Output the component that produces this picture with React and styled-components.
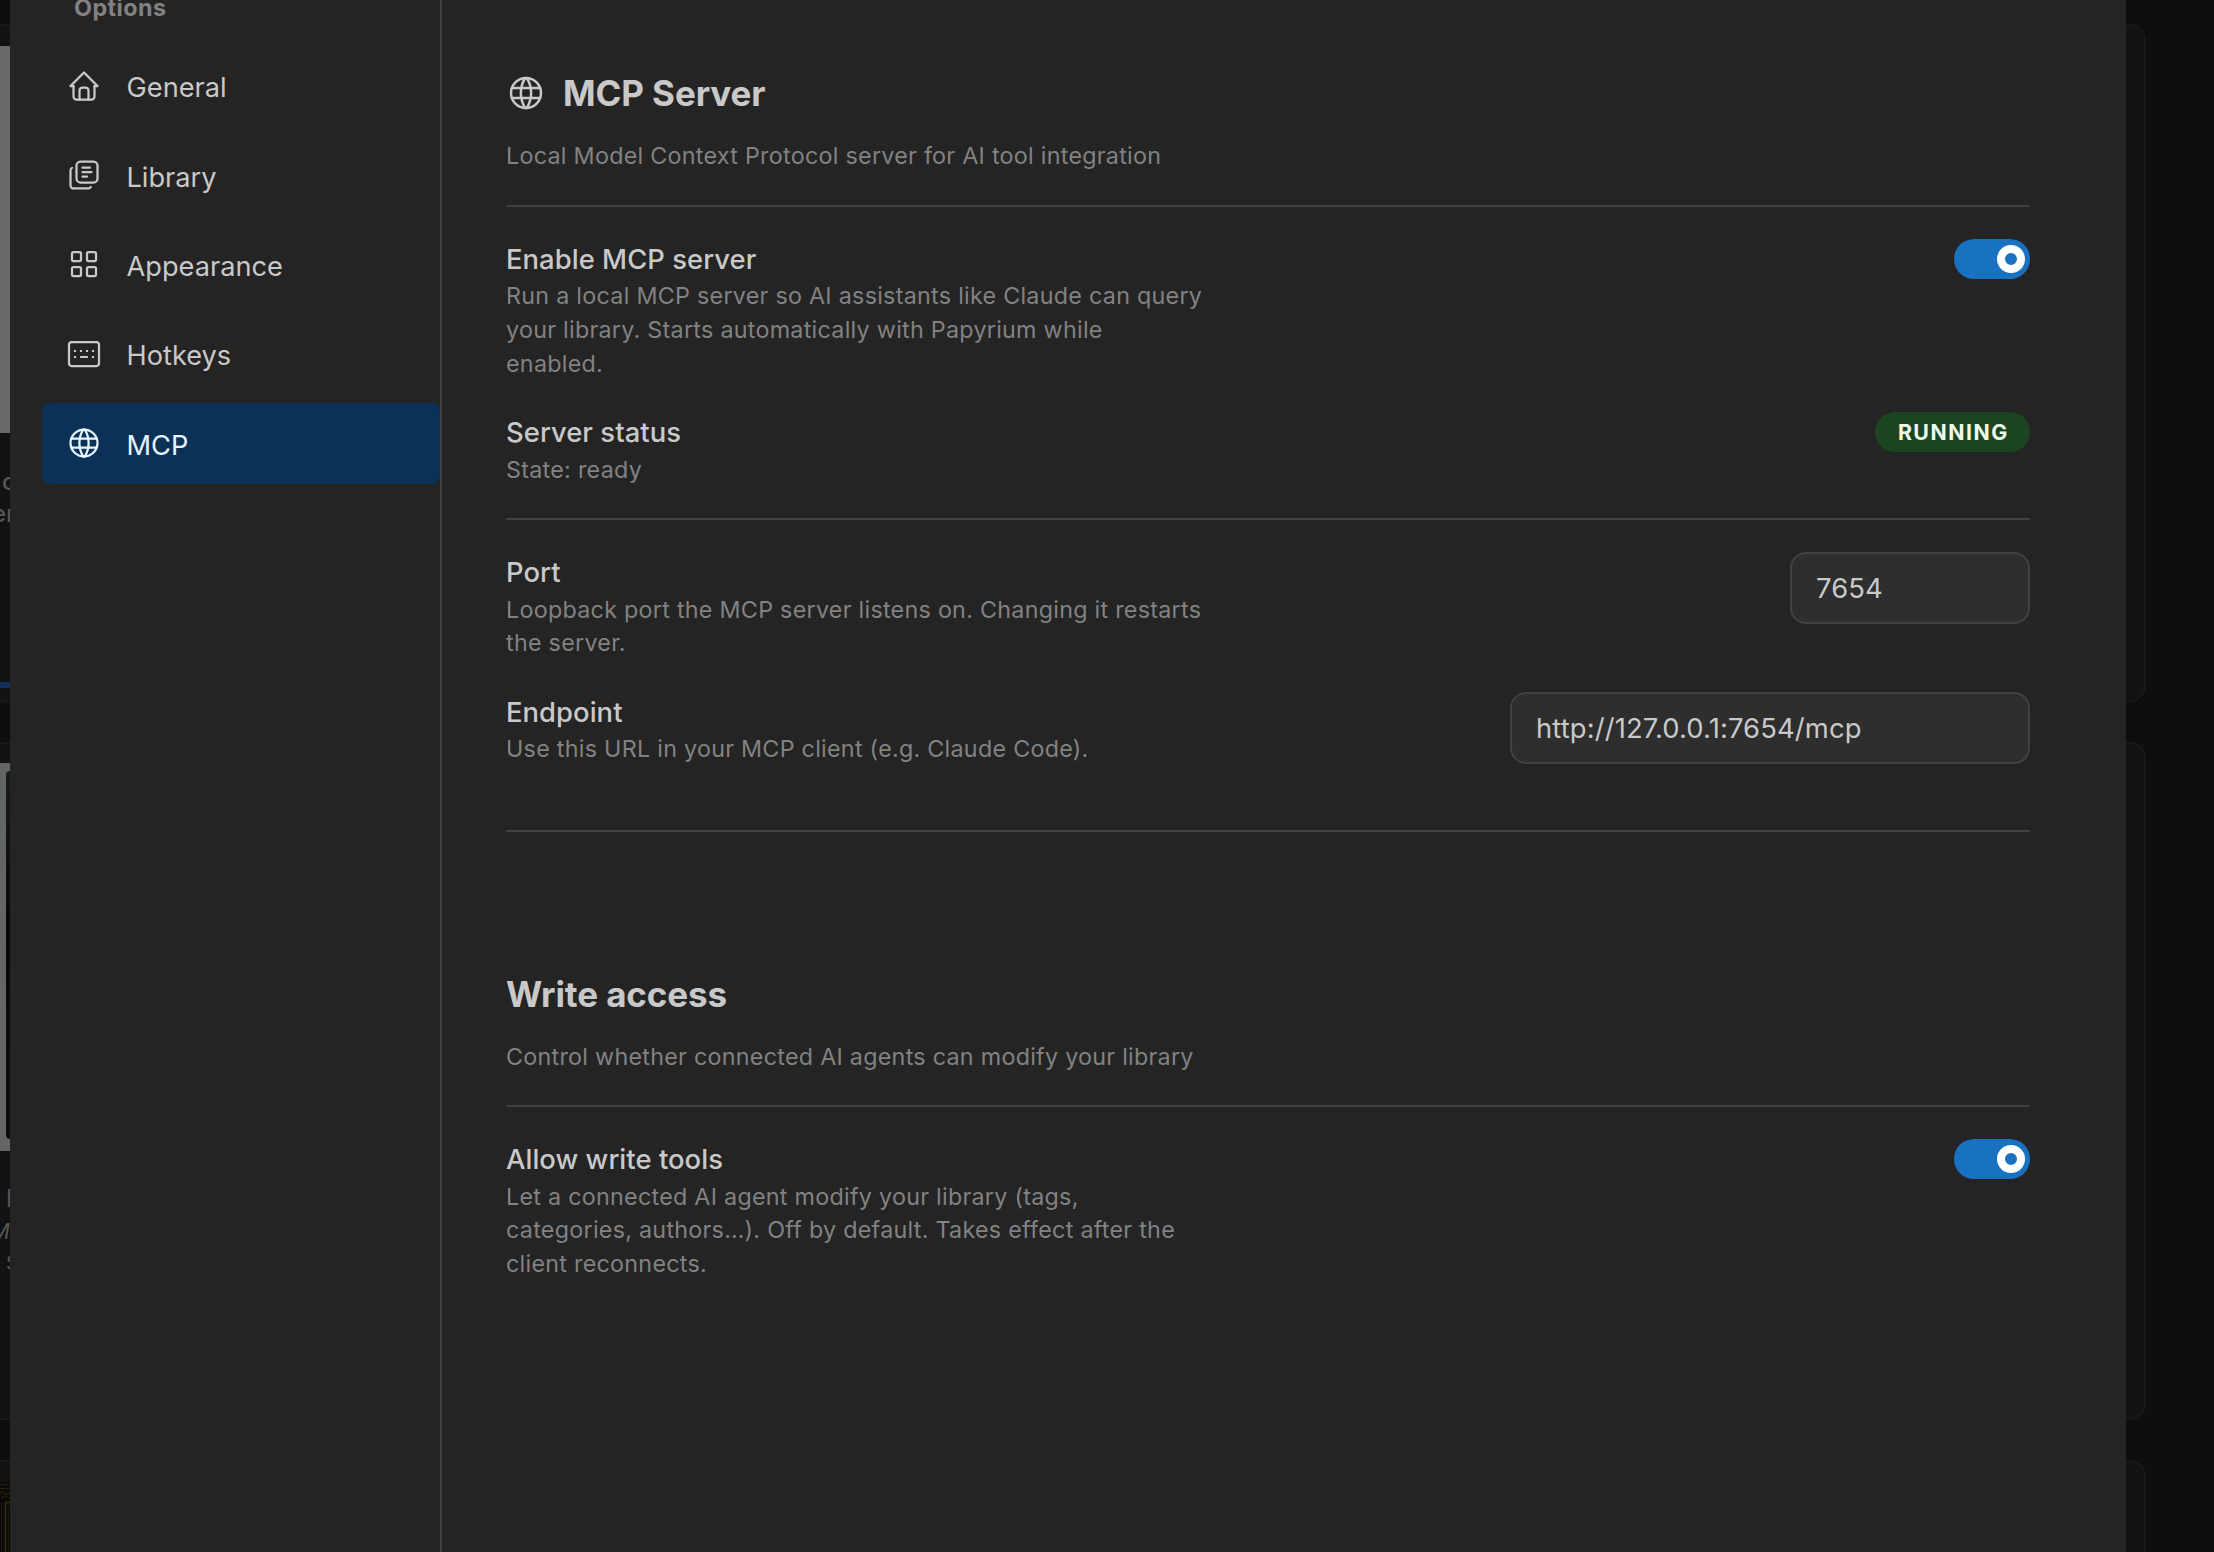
import React, { useState } from 'react';
import styled, { createGlobalStyle, ThemeProvider } from 'styled-components';
import { TbHome, TbLibrary, TbLayoutGrid, TbWorld } from 'react-icons/tb';

const theme = {
  colors: {
    backdrop: '#0e0e0e',
    card: '#121212',
    cardBorder: '#191919',
    body: '#242424',
    field: '#2e2e2e',
    border: '#424242',
    text: '#c9c9c9',
    dimmed: '#828282',
    primary: '#1971c2',
    active: '#0c3156',
    activeText: '#e7f5ff',
    success: '#1b4520',
    successText: '#ebfbee',
  },
};

const GlobalStyle = createGlobalStyle`
  * {
    box-sizing: border-box;
  }

  body {
    margin: 0;
    overflow: hidden;
    background: #0e0e0e;
    font-family: Inter, "Liberation Sans", sans-serif;
  }
`;

const Page = styled.div`
  display: grid;
  grid-template-columns: 10px 2116px 1fr;
  height: 1552px;
  overflow: hidden;
  background: ${props => props.theme.colors.backdrop};
`;

/* Slices of the library that stay visible beside the dialog */

const Shelf = styled.div`
  display: flex;
  flex-direction: column;
  gap: 40px;
  padding-top: 24px;
  overflow: hidden;
`;

const ShelfCard = styled.div`
  flex: none;
  height: 678px;
  overflow: hidden;
  background: ${props => props.theme.colors.card};
  border: 2px solid ${props => props.theme.colors.cardBorder};
  border-left: none;
  border-right-width: ${props => (props.$end ? '2px' : '0')};
  border-radius: ${props => (props.$end ? '0 16px 16px 0' : '0')};
  width: ${props => (props.$end ? '20px' : '100%')};
`;

const Cover = styled.div`
  display: flex;
  justify-content: flex-end;
  height: ${props => (props.$tall ? '388px' : '387px')};
  margin-top: ${props => (props.$tall ? '19px' : '20px')};
  padding: 8px 0 12px;
  background: ${props => (props.$tall ? '#646665' : '#686868')};
`;

const CoverArt = styled.div`
  width: 4px;
  border-radius: 4px 0 0 4px;
  background: linear-gradient(#181c1b, #060908 40%, #0a0d0c);
`;

const CardText = styled.div`
  margin-top: ${props => props.$top || 0}px;
  padding-left: ${props => props.$indent}px;
  text-indent: ${props => props.$pull || 0}px;
  height: 32px;
  overflow: hidden;
  color: #565656;
  font-size: ${props => props.$size || 24}px;
  font-weight: ${props => props.$weight || 400};
  font-style: ${props => (props.$italic ? 'italic' : 'normal')};
  line-height: 32px;
  white-space: nowrap;
`;

const Progress = styled.div`
  height: 6px;
  margin-top: ${props => props.$top}px;
  background: #14305a;
`;

const FrameArt = styled.svg`
  display: block;
  margin-top: 20px;
`;

/* Dialog */

const Dialog = styled.div`
  display: flex;
  background: ${props => props.theme.colors.body};
  color: ${props => props.theme.colors.text};
`;

const Sidebar = styled.nav`
  width: 432px;
  padding-left: 32px;
  display: flex;
  flex-direction: column;
  gap: 8px;
  border-right: 2px solid ${props => props.theme.colors.border};
`;

const SidebarHeading = styled.div`
  display: flex;
  align-items: flex-end;
  height: 37px;
  padding: 0 0 12px 32px;
  overflow: hidden;
  color: ${props => props.theme.colors.dimmed};
  font-size: 23.3px;
  font-weight: 700;
  letter-spacing: 0.45px;
  line-height: 33.6px;
`;

const NavItem = styled.button`
  display: flex;
  align-items: center;
  gap: 24px;
  height: 81.4px;
  padding: 0 24px;
  border: none;
  border-radius: 8px;
  background: ${props => (props.$active ? props.theme.colors.active : 'transparent')};
  color: ${props => (props.$active ? props.theme.colors.activeText : props.theme.colors.text)};
  font-family: inherit;
  font-size: 27.2px;
  text-align: left;

  svg {
    flex: none;
  }
`;

const NavLabel = styled.span`
  padding: 4px 0 0 0.5px;
`;

const Content = styled.main`
  flex: 1;
  display: flex;
  flex-direction: column;
  padding: 69.4px 96px 0 64px;
`;

const SectionTitle = styled.h2`
  display: flex;
  align-items: center;
  gap: 17px;
  height: 48px;
  margin: ${props => props.$top || 0}px 0 0;
  font-size: 35px;
  font-weight: 700;
  letter-spacing: -0.1px;
  line-height: 48px;
`;

const Description = styled.p`
  margin: 0;
  color: ${props => props.theme.colors.dimmed};
  font-size: 23.3px;
  letter-spacing: 0.27px;
  line-height: 33.6px;
  white-space: pre-line;
`;

const SectionIntro = styled(Description)`
  margin-top: 22px;
`;

const Divider = styled.hr`
  width: 100%;
  height: 2px;
  margin: ${props => props.$top || 32}px 0 0;
  border: none;
  background: ${props => props.theme.colors.border};
`;

const Row = styled.div`
  display: flex;
  justify-content: space-between;
  align-items: flex-start;
  margin-top: 32px;
`;

const RowLabel = styled.div`
  font-size: 27.4px;
  font-weight: 500;
  letter-spacing: 0.05px;
  line-height: 40.4px;
`;

const Track = styled.button`
  display: flex;
  align-items: center;
  justify-content: ${props => (props.$on ? 'flex-end' : 'flex-start')};
  width: 76px;
  height: 40px;
  padding: 0 5px;
  border: none;
  border-radius: 20px;
  background: ${props => (props.$on ? props.theme.colors.primary : props.theme.colors.border)};
`;

const Thumb = styled.span`
  width: 28px;
  height: 28px;
  border: 8.5px solid #fff;
  border-radius: 50%;
`;

const Badge = styled.span`
  display: flex;
  align-items: center;
  justify-content: center;
  width: 155px;
  height: 40px;
  padding-left: 1.5px;
  border-radius: 20px;
  background: ${props => props.theme.colors.success};
  color: ${props => props.theme.colors.successText};
  font-size: 21.3px;
  font-weight: 700;
  letter-spacing: 1.5px;
`;

const TextInput = styled.input`
  width: ${props => props.$width}px;
  height: 72px;
  padding: 0 24px;
  border: 2px solid ${props => props.theme.colors.border};
  border-radius: 16px;
  outline: none;
  background: ${props => props.theme.colors.field};
  color: ${props => props.theme.colors.text};
  font-family: inherit;
  font-size: 27.4px;
  letter-spacing: 0.12px;
`;

const KeyboardIcon = ({ size, strokeWidth }) => (
  <svg
    width={size}
    height={size}
    viewBox="0 0 24 24"
    fill="none"
    stroke="currentColor"
    strokeWidth={strokeWidth}
  >
    <rect x="2" y="4" width="20" height="16" rx="1.8" />
    <path d="M5.3 10h1.4M9.3 10h1.4M13.3 10h1.4M17.3 10h1.4M5.3 14h1.4M9.4 14h5.2M17.3 14h1.4" strokeWidth="1.4" />
  </svg>
);

const navItems = [
  { label: 'General', icon: TbHome },
  { label: 'Library', icon: TbLibrary },
  { label: 'Appearance', icon: TbLayoutGrid },
  { label: 'Hotkeys', icon: KeyboardIcon },
  { label: 'MCP', icon: TbWorld },
];

const Switch = ({ label }) => {
  const [on, setOn] = useState(true);

  return (
    <Track role="switch" aria-checked={on} aria-label={label} $on={on} onClick={() => setOn(!on)}>
      <Thumb />
    </Track>
  );
};

const SettingRow = ({ label, description, children }) => (
  <Row>
    <div>
      <RowLabel>{label}</RowLabel>
      <Description>{description}</Description>
    </div>
    {children}
  </Row>
);

const LeftShelf = () => (
  <Shelf>
    <ShelfCard>
      <Cover />
      <CardText $top={33} $indent={2} $weight={500}>c</CardText>
      <CardText $indent={0} $pull={-8} $weight={500}>er</CardText>
      <Progress $top={152} />
    </ShelfCard>
    <ShelfCard>
      <Cover $tall>
        <CoverArt />
      </Cover>
      <CardText $top={32} $indent={6} $weight={500}>I</CardText>
      <CardText $indent={0} $pull={-10} $size={22} $italic>M</CardText>
      <CardText $indent={6} $size={20}>S</CardText>
    </ShelfCard>
    <ShelfCard>
      <FrameArt width="10" height="90" viewBox="0 0 10 90">
        <rect width="10" height="90" fill="#0b0a08" />
        <path d="M0 2.5H10M0 6.5H10" stroke="#25200f" />
        <path d="M0 12l3-3 3 4 4-3M1 16l4-2 4 2" fill="none" stroke="#2c2512" />
        <path d="M5.5 90V20.5H10" fill="none" stroke="#3a2d10" strokeWidth="1.5" />
        <path d="M1.5 90V20M8.5 90V24" stroke="#1d180c" />
      </FrameArt>
    </ShelfCard>
  </Shelf>
);

const RightShelf = () => (
  <Shelf>
    <ShelfCard $end />
    <ShelfCard $end />
    <ShelfCard $end />
  </Shelf>
);

const App = () => {
  const [active, setActive] = useState('MCP');
  const [port, setPort] = useState('7654');

  return (
    <ThemeProvider theme={theme}>
      <GlobalStyle />
      <Page>
        <LeftShelf />
        <Dialog role="dialog">
          <Sidebar>
            <SidebarHeading>Options</SidebarHeading>
            {navItems.map(({ label, icon: Icon }) => (
              <NavItem key={label} $active={label === active} onClick={() => setActive(label)}>
                <Icon size={36} strokeWidth={1.5} />
                <NavLabel>{label}</NavLabel>
              </NavItem>
            ))}
          </Sidebar>

          <Content>
            <SectionTitle>
              <TbWorld size={40} strokeWidth={1.5} />
              MCP Server
            </SectionTitle>
            <SectionIntro>Local Model Context Protocol server for AI tool integration</SectionIntro>
            <Divider />

            <SettingRow
              label="Enable MCP server"
              description={'Run a local MCP server so AI assistants like Claude can query\nyour library. Starts automatically with Papyrium while\nenabled.'}
            >
              <Switch label="Enable MCP server" />
            </SettingRow>
            <SettingRow label="Server status" description="State: ready">
              <Badge>RUNNING</Badge>
            </SettingRow>
            <Divider />

            <SettingRow
              label="Port"
              description={'Loopback port the MCP server listens on. Changing it restarts\nthe server.'}
            >
              <TextInput $width={240} value={port} onChange={(e) => setPort(e.target.value)} />
            </SettingRow>
            <SettingRow
              label="Endpoint"
              description="Use this URL in your MCP client (e.g. Claude Code)."
            >
              <TextInput $width={520} value={`http://127.0.0.1:${port}/mcp`} readOnly />
            </SettingRow>
            <Divider $top={64} />

            <SectionTitle $top={138}>Write access</SectionTitle>
            <SectionIntro>Control whether connected AI agents can modify your library</SectionIntro>
            <Divider />

            <SettingRow
              label="Allow write tools"
              description={'Let a connected AI agent modify your library (tags,\ncategories, authors…). Off by default. Takes effect after the\nclient reconnects.'}
            >
              <Switch label="Allow write tools" />
            </SettingRow>
          </Content>
        </Dialog>
        <RightShelf />
      </Page>
    </ThemeProvider>
  );
};

export default App;
